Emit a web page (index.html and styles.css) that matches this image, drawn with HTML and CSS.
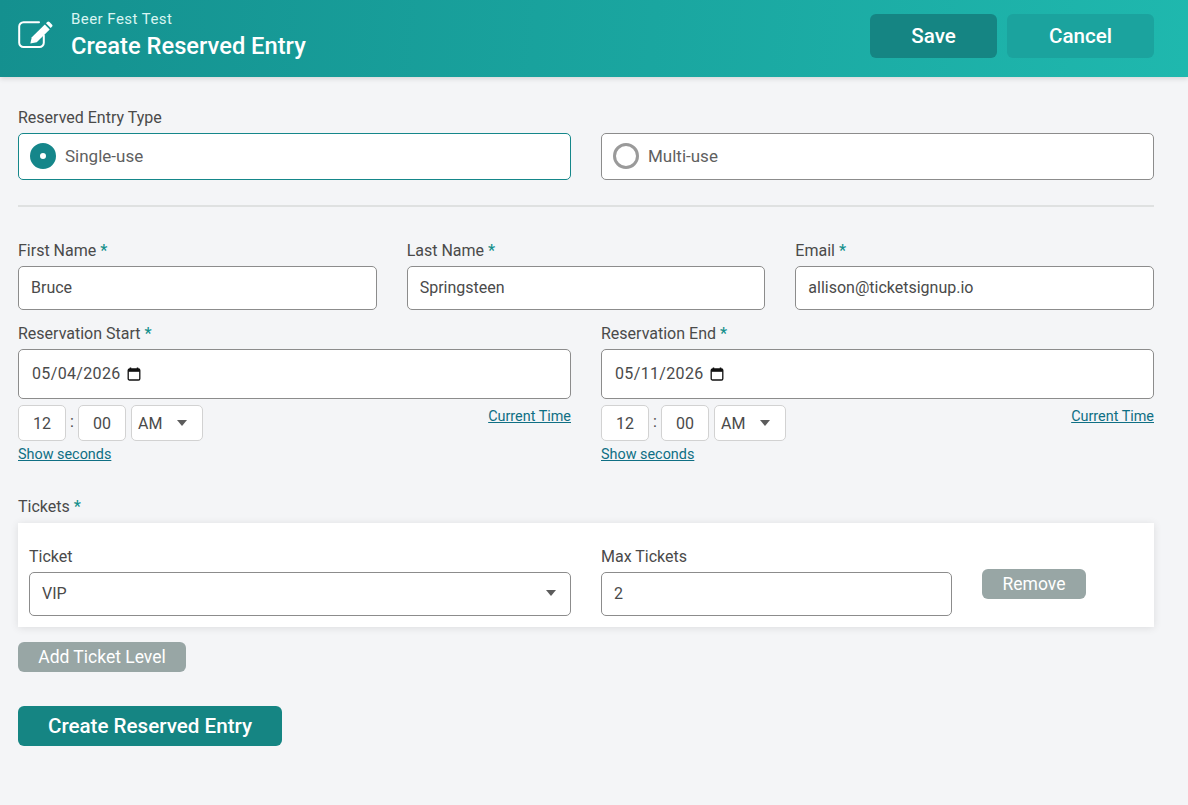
FILE: index.html
```html
<!DOCTYPE html>
<html lang="en">
  <head>
    <meta charset="UTF-8" />
    <meta name="viewport" content="width=device-width, initial-scale=1.0" />
    <title>Create Reserved Entry</title>
    <link rel="stylesheet" href="styles.css">
  </head>
  <body>
    <header class="topbar">
      <svg class="topbar-icon" width="36" height="30" viewBox="0 0 36 30">
        <path d="M21 1.300H5.500a4.300 4.300 0 0 0-4.300 4.300V21.700a4.300 4.300 0 0 0 4.300 4.300h16a4.300 4.300 0 0 0 4.300-4.300V14.500" fill="none" stroke="#fff" stroke-width="2" stroke-linecap="round"/>
        <path d="M13.800 16.200 26.800 3.500l4.900 4.900-13 12.800-6.400 1.300z" fill="#fff"/>
        <path d="M28 2.300l1.200-1.200a1.600 1.600 0 0 1 2.300 0l2.400 2.400a1.600 1.600 0 0 1 0 2.300l-1.200 1.200z" fill="#fff"/>
      </svg>
      <div class="topbar-titles">
        <div class="topbar-event">Beer Fest Test</div>
        <h1 class="topbar-title">Create Reserved Entry</h1>
      </div>
      <div class="topbar-actions">
        <button class="btn-save">Save</button>
        <button class="btn-cancel">Cancel</button>
      </div>
    </header>

    <main class="content">
      <!-- Entry type -->
      <div class="field-label type-label">Reserved Entry Type</div>
      <div class="two-col">
        <div class="type-option selected">
          <span class="radio on"></span>
          <span>Single-use</span>
        </div>
        <div class="type-option">
          <span class="radio"></span>
          <span>Multi-use</span>
        </div>
      </div>

      <hr class="divider" />

      <!-- Contact -->
      <div class="three-col">
        <div>
          <div class="field-label">First Name <span class="req">*</span></div>
          <input class="text-input" type="text" value="Bruce" />
        </div>
        <div>
          <div class="field-label">Last Name <span class="req">*</span></div>
          <input class="text-input" type="text" value="Springsteen" />
        </div>
        <div>
          <div class="field-label">Email <span class="req">*</span></div>
          <input class="text-input" type="text" value="allison@ticketsignup.io" />
        </div>
      </div>

      <!-- Reservation window -->
      <div class="two-col dates">
        <div>
          <div class="field-label">Reservation Start <span class="req">*</span></div>
          <div class="date-input">
            <span class="date-value">05/04/2026</span>
            <svg width="14" height="14" viewBox="0 0 14 14"><path d="M3.500 0.500v2M10.500 0.500v2" stroke="#111" stroke-width="1.500"/><rect x="1.200" y="2" width="11.600" height="11" rx="1.300" fill="none" stroke="#111" stroke-width="1.300"/><rect x="1.200" y="2" width="11.600" height="2.800" fill="#111"/></svg>
          </div>
          <div class="time-row">
            <div class="time-box">12</div>
            <span class="time-sep">:</span>
            <div class="time-box">00</div>
            <div class="time-ampm">AM<span class="caret"></span></div>
            <a class="link current-time" href="#">Current Time</a>
          </div>
          <a class="link show-seconds" href="#">Show seconds</a>
        </div>
        <div>
          <div class="field-label">Reservation End <span class="req">*</span></div>
          <div class="date-input">
            <span class="date-value">05/11/2026</span>
            <svg width="14" height="14" viewBox="0 0 14 14"><path d="M3.500 0.500v2M10.500 0.500v2" stroke="#111" stroke-width="1.500"/><rect x="1.200" y="2" width="11.600" height="11" rx="1.300" fill="none" stroke="#111" stroke-width="1.300"/><rect x="1.200" y="2" width="11.600" height="2.800" fill="#111"/></svg>
          </div>
          <div class="time-row">
            <div class="time-box">12</div>
            <span class="time-sep">:</span>
            <div class="time-box">00</div>
            <div class="time-ampm">AM<span class="caret"></span></div>
            <a class="link current-time" href="#">Current Time</a>
          </div>
          <a class="link show-seconds" href="#">Show seconds</a>
        </div>
      </div>

      <!-- Tickets -->
      <div class="field-label tickets-label">Tickets <span class="req">*</span></div>
      <div class="ticket-card">
        <div class="ticket-col">
          <div class="field-label">Ticket</div>
          <div class="select-input">VIP<span class="caret"></span></div>
        </div>
        <div class="max-col">
          <div class="field-label">Max Tickets</div>
          <input class="text-input" type="text" value="2" />
        </div>
        <button class="btn-grey btn-remove">Remove</button>
      </div>
      <button class="btn-grey btn-add">Add Ticket Level</button>
      <button class="btn-create">Create Reserved Entry</button>
    </main>
  </body>
</html>
```

FILE: styles.css
```css
* {
  box-sizing: border-box;
}

body {
  margin: 0;
  height: 805px;
  overflow: hidden;
  background-color: #f4f5f7;
  color: #4a4a4a;
  font-family: Roboto, "Liberation Sans", sans-serif;
  font-size: 16px;
}

button {
  font-family: inherit;
  border: none;
  color: white;
  cursor: pointer;
}

/* Top bar */
.topbar {
  display: flex;
  align-items: center;
  height: 77px;
  padding: 0 34px 0 18px;
  background: linear-gradient(95deg, #14908f, #1fb8ae);
  box-shadow: 0 2px 5px rgba(0, 0, 0, 0.12);
  color: white;
}

.topbar-icon {
  flex: none;
  margin-top: -5px;
}

.topbar-titles {
  margin-left: 17px;
  margin-top: -6px;
}

.topbar-event {
  font-size: 15px;
  line-height: 18px;
  letter-spacing: 0.45px;
  color: #d9f5f2;
}

.topbar-title {
  margin: 3px 0 0;
  font-size: 23.700px;
  line-height: 30px;
  font-weight: 500;
}

.topbar-actions {
  display: flex;
  gap: 10px;
  margin-left: auto;
  margin-top: -5px;
}

.btn-save,
.btn-cancel {
  height: 44px;
  border-radius: 6px;
  font-size: 20.600px;
  font-weight: 500;
}

.btn-save {
  width: 127px;
  background-color: #158583;
}

.btn-cancel {
  width: 147px;
  background-color: #1ba39e;
}

/* Form */
.content {
  padding: 0 34px 0 18px;
}

.field-label {
  font-size: 16px;
  line-height: 19px;
  margin-bottom: 6px;
  color: #4a4a4a;
}

.type-label {
  margin-top: 31px;
}

.req {
  color: #15908c;
  font-weight: 500;
}

.two-col {
  display: grid;
  grid-template-columns: 1fr 1fr;
  column-gap: 30px;
}

.three-col {
  display: grid;
  grid-template-columns: 1fr 1fr 1fr;
  column-gap: 30px;
}

.type-option {
  display: flex;
  align-items: center;
  gap: 9px;
  height: 47px;
  padding: 0 0 1px 11px;
  background-color: white;
  border: 1px solid #8c8c8c;
  border-radius: 5px;
  color: #5f5f5f;
  font-size: 17px;
}

.type-option.selected {
  border-color: #15878a;
}

.radio {
  width: 26px;
  height: 26px;
  border-radius: 50%;
  border: 3px solid #9a9a9a;
  background-color: white;
}

.radio.on {
  border: 10px solid #15868a;
}

.divider {
  margin: 25px 0 34px;
  border: none;
  border-top: 2px solid #dfe1e1;
}

.text-input,
.select-input {
  display: flex;
  align-items: center;
  width: 100%;
  height: 44px;
  padding: 0 12px 2px;
  background-color: white;
  border: 1px solid #8c8c8c;
  border-radius: 5px;
  color: #4a4a4a;
  font-family: inherit;
  font-size: 16px;
  outline: none;
}

.dates {
  margin-top: 14px;
}

.date-input {
  display: flex;
  align-items: center;
  gap: 6px;
  height: 50px;
  padding: 0 0 1px 13px;
  background-color: white;
  border: 1px solid #8c8c8c;
  border-radius: 5px;
}

.date-value {
  letter-spacing: 0.35px;
}

.time-row {
  display: flex;
  align-items: center;
  margin-top: 6px;
}

.time-box,
.time-ampm {
  height: 36px;
  display: flex;
  align-items: center;
  background-color: white;
  border: 1px solid #d2d2d2;
  border-radius: 5px;
}

.time-box {
  justify-content: center;
  width: 48px;
}

.time-sep {
  width: 12px;
  text-align: center;
  margin-top: -4px;
}

.time-ampm {
  width: 72px;
  margin-left: 5px;
  padding: 0 15px 0 6px;
  justify-content: space-between;
}

.caret {
  width: 0;
  height: 0;
  border-left: 5.500px solid transparent;
  border-right: 5.500px solid transparent;
  border-top: 6px solid #5c5c5c;
}

.select-input {
  justify-content: space-between;
  padding-right: 14px;
}

.link {
  color: #0f6f84;
  font-size: 14.400px;
  line-height: 16px;
}

.current-time {
  margin-left: auto;
  margin-top: -12px;
}

.show-seconds {
  display: inline-block;
  margin-top: 6px;
}

.tickets-label {
  margin-top: 34px;
  margin-bottom: 7px;
}

.ticket-card {
  display: flex;
  align-items: flex-start;
  gap: 30px;
  height: 104px;
  padding: 24px 11px 0;
  background-color: white;
  box-shadow: 0 1px 8px rgba(0, 0, 0, 0.1);
}

.ticket-col {
  width: 542px;
  flex: none;
}

.max-col {
  width: 351px;
  flex: none;
}

.btn-grey {
  display: block;
  height: 30px;
  border-radius: 6px;
  background-color: #98a6a5;
  font-size: 17.500px;
  font-weight: 400;
}

.btn-remove {
  width: 104px;
  margin-top: 22px;
}

.btn-add {
  width: 168px;
  margin-top: 15px;
}

.btn-create {
  display: block;
  width: 264px;
  height: 40px;
  margin-top: 34px;
  border-radius: 6px;
  background-color: #158583;
  font-size: 20.600px;
  font-weight: 500;
}
```
